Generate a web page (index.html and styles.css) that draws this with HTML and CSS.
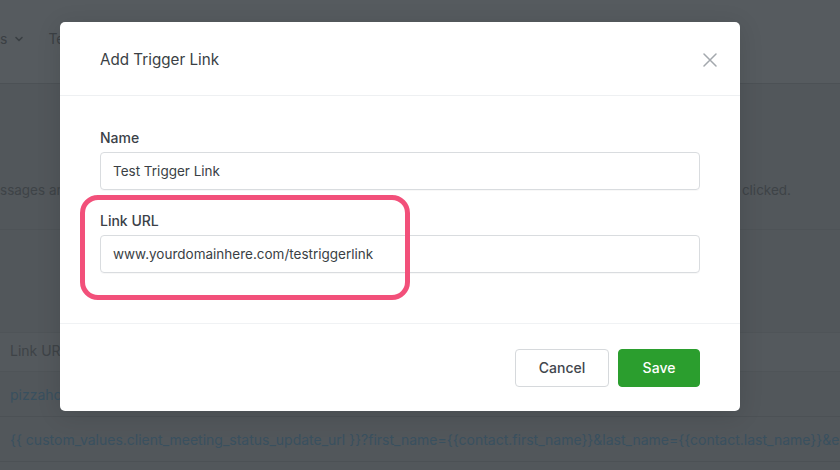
FILE: index.html
```html
<!DOCTYPE html>
<html lang="en">
<head>
<meta charset="utf-8">
<title>Add Trigger Link</title>
<link rel="stylesheet" href="styles.css">
</head>
<body>
<div class="page">
  <nav class="topbar">
    <div class="tab">s
      <svg class="chev" width="10" height="10" viewBox="0 0 10 10"><path d="M2 3.5 L5 6.5 L8 3.5" fill="none" stroke="#3a3f43" stroke-width="1.6" stroke-linecap="round" stroke-linejoin="round"/></svg>
    </div>
    <div class="tab">Test</div>
  </nav>
  <section class="intro">
    <p class="desc"><span>ssages and emails, which allow you to track specific customer actions</span><span>clicked.</span></p>
  </section>
  <section class="table">
    <div class="thead">Link URL</div>
    <div class="trow link">pizzahouse.com/order-online-now</div>
    <div class="trow link"><span class="clip">{{ custom_values.client_meeting_status_update_url }}?first_name={{contact.first_name}}&amp;last_name={{contact.last_name}}&amp;email={{contact.email}}</span></div>
  </section>
</div>

<div class="backdrop">
  <div class="modal">
    <header class="modal-header">
      <h2 class="modal-title">Add Trigger Link</h2>
      <button class="close" aria-label="Close">
        <svg width="14" height="14" viewBox="0 0 14 14"><path d="M1 1 L13 13 M13 1 L1 13" stroke="#a3a8ad" stroke-width="1.5" stroke-linecap="round"/></svg>
      </button>
    </header>
    <div class="modal-body">
      <div class="field">
        <label class="label">Name</label>
        <div class="input">Test Trigger Link</div>
      </div>
      <div class="field">
        <label class="label">Link URL</label>
        <div class="input">www.yourdomainhere.com/testriggerlink</div>
      </div>
      <div class="highlight"></div>
    </div>
    <footer class="modal-footer">
      <button class="btn btn-cancel">Cancel</button>
      <button class="btn btn-save">Save</button>
    </footer>
  </div>
</div>
</body>
</html>
```

FILE: styles.css
```css
* { box-sizing: border-box; }
html, body { margin: 0; padding: 0; }
body {
  width: 840px;
  height: 470px;
  overflow: hidden;
  background: #52575b;
  font-family: Inter, "Noto Sans", sans-serif;
  font-size: 14px;
  color: #3b4044;
  position: relative;
}
.page { width: 840px; overflow: hidden; }
.topbar {
  height: 84px;
  background: #565b5f;
  border-bottom: 1px solid #4c5155;
  display: flex;
  align-items: center;
  gap: 24px;
  padding-left: 0;
  padding-bottom: 6px;
}
.tab { display: flex; align-items: center; gap: 7px; font-size: 14px; color: #3b4044; }
.chev { margin-top: 1px; }
.intro {
  height: 146px;
  border-bottom: 1px solid #4e5357;
  padding-top: 98px;
}
.desc {
  margin: 0;
  display: flex;
  justify-content: space-between;
  padding-right: 49px;
  color: #3e4347;
  font-size: 13.5px;
}
.table { margin-top: 102px; }
.thead {
  height: 40px;
  padding-left: 10px;
  padding-bottom: 3px;
  display: flex;
  align-items: center;
  border-top: 1px solid #4f5458;
  border-bottom: 1px solid #4f5458;
  background: #54595d;
  color: #3e4347;
}
.trow {
  height: 45px;
  padding-left: 10px;
  display: flex;
  align-items: center;
  border-bottom: 1px solid #4c5155;
  white-space: nowrap;
  overflow: hidden;
}
.trow.link { color: #39505f; }
.clip { display: block; width: 830px; overflow: hidden; }

.backdrop {
  position: absolute;
  inset: 0;
}
.modal {
  position: absolute;
  left: 60px;
  top: 22px;
  width: 680px;
  height: 389px;
  background: #fff;
  border-radius: 5px;
  box-shadow: 0 4px 24px rgba(0,0,0,0.12);
  display: flex;
  flex-direction: column;
}
.modal-header {
  height: 74px;
  padding: 1px 18px 0 40px;
  display: flex;
  align-items: center;
  justify-content: space-between;
  border-bottom: 1px solid #eef0f2;
}
.modal-title {
  margin: 0;
  font-size: 15.2px;
  font-weight: 400;
  color: #3a3f45;
}
.close {
  border: 0;
  background: none;
  padding: 0;
  width: 24px;
  height: 24px;
  display: flex;
  align-items: center;
  justify-content: center;
  margin-top: 1px;
}
.modal-body {
  position: relative;
  padding: 34px 40px 50px;
  display: flex;
  flex-direction: column;
  gap: 23px;
  border-bottom: 1px solid #f0f2f4;
}
.field { display: flex; flex-direction: column; gap: 6px; }
.label {
  font-size: 14px;
  font-weight: 500;
  color: #3b4148;
  line-height: 16px;
}
.input {
  height: 38px;
  border: 1px solid #d9dcdf;
  border-radius: 4px;
  padding: 0 12px;
  display: flex;
  align-items: center;
  font-size: 13.5px;
  color: #3a3f45;
  box-shadow: 0 1px 1px rgba(0,0,0,0.03);
}
.highlight {
  position: absolute;
  left: 20px;
  top: 99px;
  width: 330px;
  height: 105px;
  border: 5px solid #f2507a;
  border-radius: 18px;
  pointer-events: none;
}
.modal-footer {
  flex: 1;
  display: flex;
  justify-content: flex-end;
  align-items: center;
  gap: 9px;
  padding: 0 40px 0;
}
.btn {
  height: 38px;
  border-radius: 4px;
  font-family: Inter, "Noto Sans", sans-serif;
  font-size: 14px;
  font-weight: 500;
  cursor: pointer;
}
.btn-cancel {
  width: 94px;
  background: #fff;
  border: 1px solid #d6d9dc;
  color: #41464d;
}
.btn-save {
  width: 82px;
  background: #2b9e2e;
  border: 1px solid #2b9e2e;
  color: #fff;
}
```
